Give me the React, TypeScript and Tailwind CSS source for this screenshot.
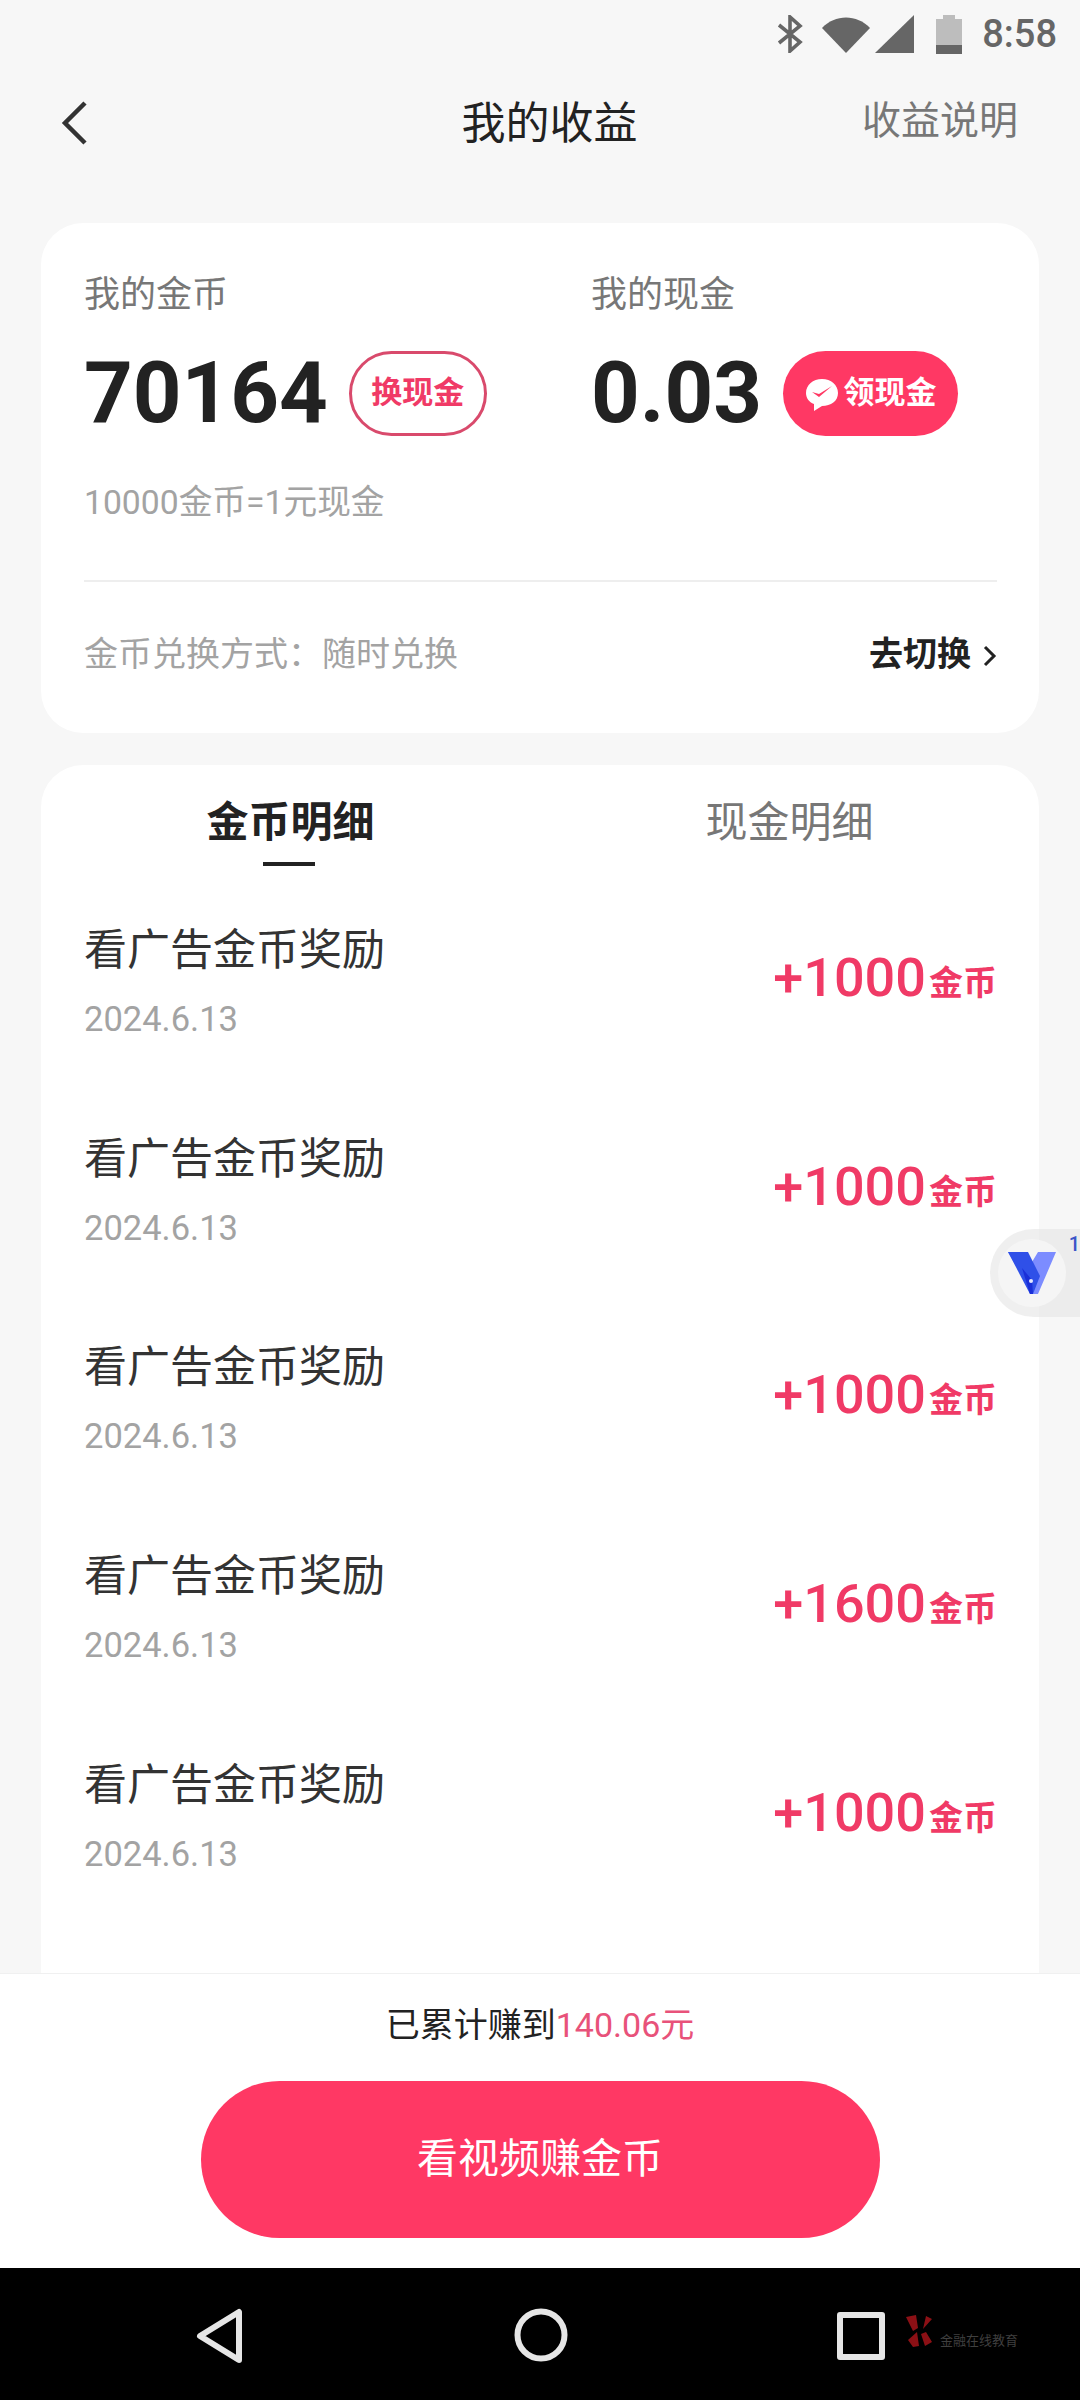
const fontStack = { fontFamily: 'Roboto, "Noto Sans CJK SC", sans-serif' };

const rows = ["+1000", "+1000", "+1000", "+1600", "+1000"];

function StatusBar() {
  return (
    <div className="flex h-[64px] items-center justify-end pr-[23px] pt-[4px] text-[#666666]">
      <svg width="26" height="38" viewBox="0 0 26 38" className="mr-[18px]" fill="none" stroke="#666666" strokeWidth="3.6">
        <path d="M2 10 L23 27 L13 36 V2 L23 11 L2 28" />
      </svg>
      <svg width="50" height="38" viewBox="0 0 50 38" className="mr-[4px]">
        <path d="M1 13 C14 -1 36 -1 49 13 L25 38 Z" fill="#666666" />
      </svg>
      <svg width="39" height="38" viewBox="0 0 39 38" className="mr-[22px]">
        <path d="M0 38 L39 0 V38 Z" fill="#666666" />
      </svg>
      <div className="mr-[20px] flex w-[26px] flex-col items-center">
        <div className="h-[4px] w-[12px] bg-[#bdbdbd]" />
        <div className="h-[26px] w-[26px] bg-[#bdbdbd]" />
        <div className="h-[9px] w-[26px] bg-[#666666]" />
      </div>
      <span className="text-[38px] leading-none font-medium">8:58</span>
    </div>
  );
}

function Header() {
  return (
    <div className="flex h-[116px] items-center justify-between pb-[2px] pr-[62px] pl-[60px]">
      <svg width="28" height="46" viewBox="0 0 28 46" className="mt-[3px]" fill="none" stroke="#333333" strokeWidth="4.5">
        <path d="M25 3 L5 23 L25 43" />
      </svg>
      <span className="ml-[149px] mt-[5px] text-[44px] leading-none text-[#222222]">我的收益</span>
      <span className="mt-[1px] text-[39px] leading-none text-[#777777]">收益说明</span>
    </div>
  );
}

function SummaryCard() {
  return (
    <div className="mx-[41px] mt-[43px] h-[510px] rounded-[42px] bg-white pr-[42px] pl-[43px]">
      <div className="flex pt-[47px]">
        <div className="w-[507px]">
          <div className="text-[36px] leading-[50px] text-[#777777]">我的金币</div>
          <div className="mt-[31px] flex h-[85px] items-center">
            <span className="text-[85px] leading-none font-bold text-[#222222]">70164</span>
            <span className="ml-[21px] flex h-[85px] w-[138px] items-center justify-center rounded-full border-[3px] border-[#d94a6c] text-[31px] font-bold text-[#f03a66]">
              换现金
            </span>
          </div>
        </div>
        <div>
          <div className="text-[36px] leading-[50px] text-[#777777]">我的现金</div>
          <div className="mt-[31px] flex h-[85px] items-center">
            <span className="text-[85px] leading-none font-bold text-[#222222]">0.03</span>
            <span className="ml-[21px] flex h-[85px] w-[175px] items-center justify-center rounded-full bg-[#ff3864] text-[31px] font-bold text-white">
              <svg width="36" height="36" viewBox="0 0 36 36" className="mr-[3px]">
                <path d="M18 3 C27 3 34 9 34 17 C34 25 27 30 18 30 L10 35 L10 28 C5 26 2 22 2 17 C2 9 9 3 18 3 Z" fill="white" />
                <path d="M8 16 L15 21 L28 10 L15 18 Z" fill="#ff3864" />
              </svg>
              领现金
            </span>
          </div>
        </div>
      </div>
      <div className="mt-[42px] text-[33.7px] leading-[50px] text-[#a3a3a3]">10000金币=1元现金</div>
      <div className="mt-[52px] h-[2px] bg-[#eeeeee]" />
      <div className="flex h-[144px] items-center justify-between">
        <span className="text-[34px] text-[#a3a3a3]">金币兑换方式：随时兑换</span>
        <span className="flex items-center text-[34px] font-bold text-[#222222]">
          去切换
          <svg width="14" height="24" viewBox="0 0 14 24" className="ml-[12px] mt-[4px]" fill="none" stroke="#222222" strokeWidth="3">
            <path d="M2 3 L11 12 L2 21" />
          </svg>
        </span>
      </div>
    </div>
  );
}

function DetailCard() {
  return (
    <div className="mx-[41px] mt-[32px] flex-1 overflow-hidden rounded-t-[42px] bg-white">
      <div className="flex h-[88px] items-end">
        <div className="flex w-[500px] justify-center">
          <div className="relative text-[42px] leading-[60px] font-bold text-[#222222]">
            金币明细
            <div className="absolute top-[69px] left-[57px] h-[4px] w-[52px] bg-[#222222]" />
          </div>
        </div>
        <div className="flex w-[500px] justify-center">
          <span className="text-[42px] leading-[60px] text-[#777777]">现金明细</span>
        </div>
      </div>
      <div className="pt-[39px]">
        {rows.map((amount, i) => (
          <div key={i} className="flex h-[208.7px] items-start justify-between pr-[42px] pl-[43px]">
            <div>
              <div className="pt-[28px] text-[43px] leading-[60px] text-[#333333]">看广告金币奖励</div>
              <div className="mt-[17px] text-[34.5px] leading-[44px] text-[#a3a3a3]">2024.6.13</div>
            </div>
            <div className="mt-[51px] flex items-baseline text-[#f03a66]">
              <span className="text-[54px] leading-[70px] font-medium">{amount}</span>
              <span className="relative top-[-1px] ml-[3px] text-[34px] font-bold">金币</span>
            </div>
          </div>
        ))}
      </div>
    </div>
  );
}

function BottomBar() {
  return (
    <div className="h-[295px] border-t border-[#f0f0f0] bg-white">
      <div className="pt-[28px] text-center text-[34px] leading-[46px] text-[#222222]">
        已累计赚到<span className="text-[#e8527a]">140.06元</span>
      </div>
      <div className="mx-auto mt-[33px] flex h-[157px] w-[679px] items-center justify-center rounded-full bg-[#ff3864] text-[41px] text-white">
        看视频赚金币
      </div>
    </div>
  );
}

function NavBar() {
  return (
    <div className="relative flex h-[132px] items-start bg-black pt-[40px]">
      <svg width="48" height="56" viewBox="0 0 48 56" className="ml-[196px]" fill="none" stroke="#e6e6e6" strokeWidth="6" strokeLinejoin="round">
        <path d="M43 4 V52 L4 28 Z" />
      </svg>
      <svg width="54" height="54" viewBox="0 0 54 54" className="ml-[270px]" fill="none" stroke="#e6e6e6" strokeWidth="6">
        <circle cx="27" cy="27" r="23.5" />
      </svg>
      <svg width="48" height="48" viewBox="0 0 48 48" className="ml-[269px] mt-[4px]" fill="none" stroke="#e6e6e6" strokeWidth="6" strokeLinejoin="round">
        <rect x="3" y="3" width="42" height="42" />
      </svg>
      {/* watermark */}
      <svg width="28" height="32" viewBox="0 0 28 32" className="absolute top-[47px] left-[905px]">
        <path d="M1 2 L11 0 L13 13 L8 16 Z M18 14 L21 1 L27 4 Z M3 25 L12 17 L14 31 L8 32 Z M16 19 L21 17 L27 27 L20 31 Z" fill="#8c1015" />
      </svg>
      <span className="absolute top-[66px] left-[940px] text-[13px] leading-none text-[#3f3f3f]">金融在线教育</span>
    </div>
  );
}

function FloatBadge() {
  return (
    <div className="absolute top-[1229px] left-[990px] flex h-[88px] w-[90px] items-center rounded-l-[44px] bg-[#e4e4e4]/60 pl-[8px]">
      <div className="flex h-[68px] w-[68px] items-center justify-center rounded-full bg-[#f5f5f5]">
        <svg width="48" height="42" viewBox="0 0 48 42">
          <path d="M0 0 H18 L24 10 L30 0 H48 L30 42 H24 Z" fill="#7c8cff" />
          <path d="M0 0 H20 L32 24 L25 42 H22 Z" fill="#2f50e8" />
          <path d="M14 16 L24 28 L25 42 H22 Z" fill="#1a2fd8" />
          <circle cx="23" cy="29" r="2" fill="#e6e9ff" />
        </svg>
      </div>
      <span className="absolute top-[5px] right-[0px] text-[20px] leading-none font-medium text-[#3b55c8]">1</span>
    </div>
  );
}

function App() {
  return (
    <div className="relative flex h-[2400px] w-[1080px] flex-col overflow-hidden bg-[#f7f7f7]" style={fontStack}>
      <StatusBar />
      <Header />
      <SummaryCard />
      <DetailCard />
      <BottomBar />
      <NavBar />
      <FloatBadge />
    </div>
  );
}

export default App;
